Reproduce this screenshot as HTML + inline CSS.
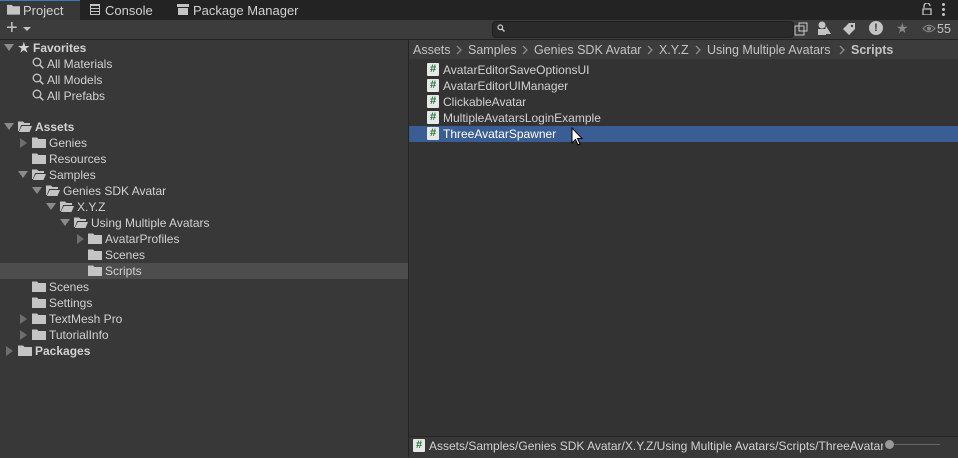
<!DOCTYPE html><html><head><style>
body{margin:0;width:958px;height:457px;background:#383838;font-family:"Liberation Sans",sans-serif;font-size:12px;color:#d2d2d2;position:relative;overflow:hidden}
.a{position:absolute;white-space:nowrap}
.r{position:absolute;height:16px;line-height:16px;white-space:nowrap}
.r svg{vertical-align:-1px;margin-right:3px}
.t{position:absolute;width:0;height:0}
.td{border-left:5px solid transparent;border-right:5px solid transparent;border-top:7px solid #8a8a8a}
.tr{border-top:5px solid transparent;border-bottom:5px solid transparent;border-left:7px solid #6e6e6e}
.h{display:inline-block;width:12px;height:13px;background:#e8e8e8;color:#1f7a32;font-weight:bold;font-size:11px;line-height:13px;text-align:center;vertical-align:top;margin-top:1px;margin-right:4px;border-radius:1px}
.b{font-weight:bold}
.bc{position:absolute;top:42px;height:16px;line-height:16px;color:#c4c4c4;font-size:12.5px;white-space:nowrap}
</style></head><body>
<svg width="0" height="0" style="position:absolute"><defs>
<symbol id="fc" viewBox="0 0 14 11"><path d="M0 0.5h5l1.5 1.5H14V11H0z" fill="#c4c4c4"/></symbol>
<symbol id="fo" viewBox="0 0 14 11"><path d="M0 0.5h5l1.5 1.5H12V4H3.2L0.8 10H0z" fill="#c4c4c4"/><path d="M3.8 5H14L11.5 11H0.8z" fill="#c4c4c4"/></symbol>
<symbol id="ch" viewBox="0 0 6 10"><path d="M1 1l4 4-4 4" fill="none" stroke="#8a8a8a" stroke-width="1.3"/></symbol>
</defs></svg>
<div class="a" style="left:0;top:0;width:958px;height:20px;background:#232323"></div>
<div class="a" style="left:0;top:0;width:80px;height:21px;background:#383838;border-top:1px solid #3a79bb;box-sizing:border-box"></div>
<svg class="a" style="left:7px;top:4px" width="13" height="11"><use href="#fc"/></svg>
<div class="a" style="left:23px;top:3px;font-size:13px">Project</div>
<div class="a" style="left:90px;top:4px;width:10px;height:11px;border:1.5px solid #c4c4c4;box-sizing:border-box;background:repeating-linear-gradient(#c4c4c4 0 1px,#0000 1px 3px)"></div>
<div class="a" style="left:105px;top:3px;font-size:13px">Console</div>
<div class="a" style="left:177px;top:4px;width:12px;height:3px;background:#c4c4c4"></div>
<div class="a" style="left:178px;top:8px;width:10px;height:7px;background:#c4c4c4"></div>
<div class="a" style="left:193px;top:3px;font-size:13px">Package Manager</div>
<svg class="a" style="left:922px;top:3px" width="10" height="12"><path d="M2 5V3a3 3 0 0 1 6 0" fill="none" stroke="#c4c4c4" stroke-width="1.3"/><rect x="1" y="6" width="8" height="6" fill="none" stroke="#c4c4c4" stroke-width="1.3"/></svg>
<div class="a" style="left:942px;top:3px;width:3px;height:3px;background:#c4c4c4;border-radius:50%;box-shadow:0 5px #c4c4c4,0 10px #c4c4c4"></div>
<div class="a" style="left:0;top:20px;width:958px;height:19px;background:#3c3c3c;border-bottom:1px solid #232323"></div>
<div class="a" style="left:6px;top:17px;font-size:20px;color:#c4c4c4">+</div>
<div class="t" style="left:23px;top:27px;border-left:4px solid transparent;border-right:4px solid transparent;border-top:4px solid #c4c4c4"></div>
<div class="a" style="left:492px;top:21px;width:300px;height:15px;background:#2a2a2a;border:1px solid #1e1e1e;border-radius:4px"></div>
<svg class="a" style="left:497px;top:24px" width="8" height="8"><circle cx="3.3" cy="3.3" r="2.3" fill="none" stroke="#ccc" stroke-width="1.2"/><path d="M5 5l2.5 2.5" stroke="#ccc" stroke-width="1.4"/></svg>
<svg class="a" style="left:794px;top:22px" width="14" height="14"><rect x="1" y="4" width="9" height="9" fill="none" stroke="#ccc"/><rect x="5" y="1" width="8" height="8" fill="none" stroke="#ccc"/></svg>
<svg class="a" style="left:817px;top:21px" width="15" height="15"><circle cx="5" cy="4" r="3.5" fill="#c4c4c4"/><rect x="1" y="8" width="8" height="6" fill="#c4c4c4"/><path d="M9 5l5 8H7z" fill="#c4c4c4"/></svg>
<svg class="a" style="left:842px;top:22px" width="14" height="13"><path d="M7 1h6v6l-6 6-6-6z" fill="#c4c4c4"/><circle cx="10" cy="4" r="1.2" fill="#3c3c3c"/></svg>
<div class="a" style="left:869px;top:21px;width:14px;height:14px;background:#c4c4c4;border-radius:50%;color:#3c3c3c;font-weight:bold;font-size:11px;text-align:center;line-height:14px">!</div>
<div class="a" style="left:896px;top:20px;color:#888;font-size:14px">★</div>
<svg class="a" style="left:922px;top:24px" width="14" height="9"><path d="M1 4.5Q7-2 13 4.5Q7 11 1 4.5z" fill="none" stroke="#888"/><circle cx="7" cy="4.5" r="2" fill="#888"/></svg>
<div class="a" style="left:937px;top:22px;color:#c4c4c4;font-size:12.5px">55</div>
<!-- left tree -->
<div class="a" style="left:408px;top:40px;width:1px;height:417px;background:#232323"></div>
<div class="t td" style="left:4px;top:44px"></div>
<div class="r b" style="left:18px;top:40px"><span style="font-size:13px">★</span> Favorites</div>
<svg width="0" height="0" style="position:absolute"><defs><symbol id="mg" viewBox="0 0 12 12"><circle cx="5" cy="5" r="3.8" fill="none" stroke="#c4c4c4" stroke-width="1.3"/><path d="M7.8 7.8l3.5 3.5" stroke="#c4c4c4" stroke-width="1.5"/></symbol></defs></svg>
<div class="r" style="left:32px;top:56px"><svg width="12" height="12"><use href="#mg"/></svg>All Materials</div>
<div class="r" style="left:32px;top:72px"><svg width="12" height="12"><use href="#mg"/></svg>All Models</div>
<div class="r" style="left:32px;top:88px"><svg width="12" height="12"><use href="#mg"/></svg>All Prefabs</div>
<div class="t td" style="left:4px;top:123px"></div>
<div class="r b" style="left:18px;top:119px"><svg width="14" height="11"><use href="#fo"/></svg>Assets</div>
<div class="t tr" style="left:20px;top:138px"></div>
<div class="r" style="left:32px;top:135px"><svg width="14" height="11"><use href="#fc"/></svg>Genies</div>
<div class="r" style="left:32px;top:151px"><svg width="14" height="11"><use href="#fc"/></svg>Resources</div>
<div class="t td" style="left:18px;top:171px"></div>
<div class="r" style="left:32px;top:167px"><svg width="14" height="11"><use href="#fo"/></svg>Samples</div>
<div class="t td" style="left:32px;top:187px"></div>
<div class="r" style="left:46px;top:183px"><svg width="14" height="11"><use href="#fo"/></svg>Genies SDK Avatar</div>
<div class="t td" style="left:46px;top:203px"></div>
<div class="r" style="left:60px;top:199px"><svg width="14" height="11"><use href="#fo"/></svg>X.Y.Z</div>
<div class="t td" style="left:60px;top:219px"></div>
<div class="r" style="left:74px;top:215px"><svg width="14" height="11"><use href="#fo"/></svg>Using Multiple Avatars</div>
<div class="t tr" style="left:77px;top:234px"></div>
<div class="r" style="left:88px;top:231px"><svg width="14" height="11"><use href="#fc"/></svg>AvatarProfiles</div>
<div class="r" style="left:88px;top:247px"><svg width="14" height="11"><use href="#fc"/></svg>Scenes</div>
<div class="a" style="left:0;top:263px;width:408px;height:16px;background:#4d4d4d"></div>
<div class="r" style="left:88px;top:263px"><svg width="14" height="11"><use href="#fc"/></svg>Scripts</div>
<div class="r" style="left:32px;top:279px"><svg width="14" height="11"><use href="#fc"/></svg>Scenes</div>
<div class="r" style="left:32px;top:295px"><svg width="14" height="11"><use href="#fc"/></svg>Settings</div>
<div class="t tr" style="left:20px;top:314px"></div>
<div class="r" style="left:32px;top:311px"><svg width="14" height="11"><use href="#fc"/></svg>TextMesh Pro</div>
<div class="t tr" style="left:20px;top:330px"></div>
<div class="r" style="left:32px;top:327px"><svg width="14" height="11"><use href="#fc"/></svg>TutorialInfo</div>
<div class="t tr" style="left:6px;top:346px"></div>
<div class="r b" style="left:18px;top:343px"><svg width="14" height="11"><use href="#fc"/></svg>Packages</div>
<!-- right -->
<div class="a" style="left:409px;top:40px;width:549px;height:19px;background:#3c3c3c"></div>
<div class="a" style="left:409px;top:59px;width:549px;height:377px;background:#333"></div>
<div class="bc" style="left:413px">Assets</div>
<svg class="a" style="left:456px;top:45px" width="6" height="10"><use href="#ch"/></svg>
<div class="bc" style="left:468px">Samples</div>
<svg class="a" style="left:522px;top:45px" width="6" height="10"><use href="#ch"/></svg>
<div class="bc" style="left:534px">Genies SDK Avatar</div>
<svg class="a" style="left:647px;top:45px" width="6" height="10"><use href="#ch"/></svg>
<div class="bc" style="left:659px">X.Y.Z</div>
<svg class="a" style="left:695px;top:45px" width="6" height="10"><use href="#ch"/></svg>
<div class="bc" style="left:707px">Using Multiple Avatars</div>
<svg class="a" style="left:839px;top:45px" width="6" height="10"><use href="#ch"/></svg>
<div class="bc" style="left:851px;font-weight:bold">Scripts</div>
<div class="r" style="left:427px;top:62px"><span class="h">#</span>AvatarEditorSaveOptionsUI</div>
<div class="r" style="left:427px;top:78px"><span class="h">#</span>AvatarEditorUIManager</div>
<div class="r" style="left:427px;top:94px"><span class="h">#</span>ClickableAvatar</div>
<div class="r" style="left:427px;top:110px"><span class="h">#</span>MultipleAvatarsLoginExample</div>
<div class="a" style="left:409px;top:126px;width:549px;height:16px;background:#3a5d94"></div>
<div class="r" style="left:427px;top:126px;color:#fff"><span class="h">#</span>ThreeAvatarSpawner</div>
<svg class="a" style="left:571px;top:127px" width="12" height="20" viewBox="0 0 12 20"><path d="M1 1 L1 16 L4.5 12.5 L7 18 L9 17 L6.5 11.5 L11 11.5 Z" fill="#fff" stroke="#000" stroke-width="1"/></svg>
<div class="a" style="left:409px;top:436px;width:549px;height:21px;background:#383838;border-top:1px solid #262626"></div>
<div class="r" style="left:413px;top:438px;width:470px;overflow:hidden"><span class="h">#</span>Assets/Samples/Genies SDK Avatar/X.Y.Z/Using Multiple Avatars/Scripts/ThreeAvatarSpawner</div>
<div class="a" style="left:890px;top:444px;width:50px;height:1px;background:#666"></div>
<div class="a" style="left:885px;top:440px;width:9px;height:9px;border-radius:50%;background:#999"></div>
</body></html>
